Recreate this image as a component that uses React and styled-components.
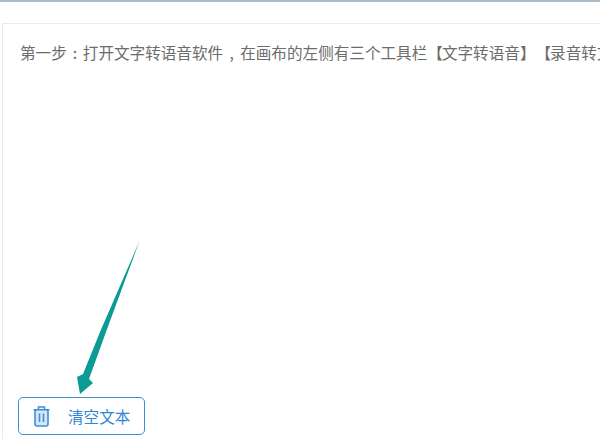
import React from 'react';
import styled, { createGlobalStyle } from 'styled-components';

const GlobalStyle = createGlobalStyle`
  html, body {
    margin: 0;
    height: 100%;
    overflow: hidden;
    background: #fff;
  }
`;

const Page = styled.div`
  position: relative;
  width: 600px;
  height: 439px;
  overflow: hidden;
  box-sizing: border-box;
  border-top: 2px solid #a9bccb;
  padding: 21px 0 0 2px;
  background: #fff;
  font-family: "Noto Sans CJK SC", "Liberation Sans", sans-serif;
`;

const Card = styled.div`
  box-sizing: border-box;
  width: 640px;
  height: 420px;
  display: flex;
  flex-direction: column;
  justify-content: space-between;
  padding: 16px 15px 0;
  border: 1px solid #e8ebee;
  background: #fff;
`;

const Content = styled.div`
  height: 24px;
  width: 600px;
  padding-left: 2px;
  font-size: 15.6px;
  line-height: 24px;
  color: #6c6c6c;
  white-space: nowrap;
  text-spacing-trim: space-all;
`;

const Punct = styled.span`
  display: inline-block;
  width: ${(p) => p.$width}px;
  text-align: center;
`;

const OpenBracket = styled.span`
  letter-spacing: -1px;
`;

const ClearButton = styled.button`
  box-sizing: border-box;
  width: 127px;
  height: 38px;
  margin-bottom: 7px;
  display: flex;
  align-items: center;
  gap: 18px;
  padding: 0 0 0 14px;
  border: 1px solid #3d8fd1;
  border-radius: 5px;
  background: #fff;
  color: #2f86d6;
  font-family: inherit;
  font-size: 15.6px;
`;

const Arrow = styled.svg`
  position: absolute;
  left: 0;
  top: 0;
  pointer-events: none;
`;

const TrashIcon = () => (
  <svg width="17" height="21" viewBox="0 0 17 21" fill="none" stroke="#3d8fd6" strokeWidth="1.6">
    <path d="M0.5 3.8h16M5.5 3.8V1h6v2.8" />
    <rect x="2" y="3.8" width="13" height="16.2" rx="2" fill="#d4e7f9" />
    <path d="M6.5 7.5v8.5M10.5 7.5v8.5" />
  </svg>
);

const App = () => (
  <Page>
    <GlobalStyle />
    <Card>
      <Content>
        第一步<Punct $width={16}>:</Punct>打开文字转语音软件<Punct $width={17}>,</Punct>
        在画布的左侧有三个工具栏<OpenBracket>【</OpenBracket>文字转语音】<OpenBracket>【</OpenBracket>录音转文字】
      </Content>
      <ClearButton>
        <TrashIcon />
        清空文本
      </ClearButton>
    </Card>
    <Arrow width="600" height="439" viewBox="0 0 600 439">
      <path d="M139.5 239 L106 330 L89 377 L93 381 L80 392 L77 375 L83 372 L100 330 Z" fill="#0b9a94" />
    </Arrow>
  </Page>
);

export default App;
